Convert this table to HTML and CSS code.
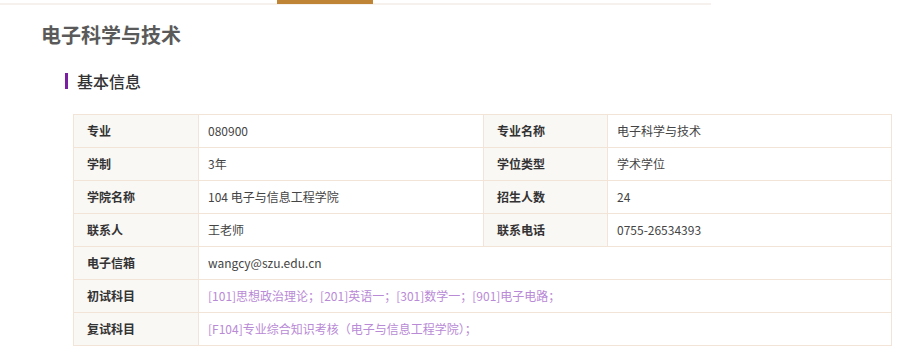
FILE: index.html
```html
<!DOCTYPE html>
<html lang="zh">
<head>
<meta charset="utf-8">
<link rel="stylesheet" href="styles.css">
</head>
<body>
<div class="tabbar"><div class="tab-active"></div></div>
<h1 class="title">电子科学与技术</h1>
<h2 class="section"><span class="mark"></span>基本信息</h2>
<table class="info">
  <colgroup><col class="c1"><col class="c2"><col class="c3"><col class="c4"></colgroup>
  <tr><th>专业</th><td>080900</td><th>专业名称</th><td>电子科学与技术</td></tr>
  <tr><th>学制</th><td>3年</td><th>学位类型</th><td>学术学位</td></tr>
  <tr><th>学院名称</th><td>104 电子与信息工程学院</td><th>招生人数</th><td>24</td></tr>
  <tr><th>联系人</th><td>王老师</td><th>联系电话</th><td>0755-26534393</td></tr>
  <tr><th>电子信箱</th><td colspan="3">wangcy@szu.edu.cn</td></tr>
  <tr><th>初试科目</th><td colspan="3" class="subj">[101]思想政治理论；[201]英语一；[301]数学一；[901]电子电路；</td></tr>
  <tr><th>复试科目</th><td colspan="3" class="subj">[F104]专业综合知识考核（电子与信息工程学院）；</td></tr>
</table>
</body>
</html>
```

FILE: styles.css
```css
html, body { margin: 0; padding: 0; background: #fff; }
body { font-family: "Noto Sans CJK SC", "Noto Sans", sans-serif; color: #333; }
.tabbar { width: 711px; height: 2px; margin-top: 3px; background: #f6f1ec; position: relative; }
.tab-active { position: absolute; left: 277px; top: -3px; width: 96px; height: 4px; background: #bf8436; }
.title { margin: 16px 0 0 41px; font-size: 20px; line-height: 28px; font-weight: bold; color: #5a5a5a; }
.section { display: flex; align-items: center; margin: 20px 0 0 65px; font-size: 16px; line-height: 24px; font-weight: 500; color: #333; }
.mark { width: 3px; height: 16px; background: #7a1fa2; margin-right: 9px; }
.info { margin: 21px 0 0 73px; border-collapse: collapse; width: 818px; table-layout: fixed; font-size: 12px; }
.c1 { width: 125px; } .c2 { width: 285px; } .c3 { width: 124px; } .c4 { width: 284px; }
.info th, .info td { border: 1px solid #f2e4d6; height: 32px; padding: 0; line-height: 16px; text-align: left; }
.info th { background: #faf8f5; font-weight: bold; padding-left: 13px; color: #333; }
.info td { padding-left: 9px; color: #444; }
.info td.subj { color: #b98ad6; }
```
